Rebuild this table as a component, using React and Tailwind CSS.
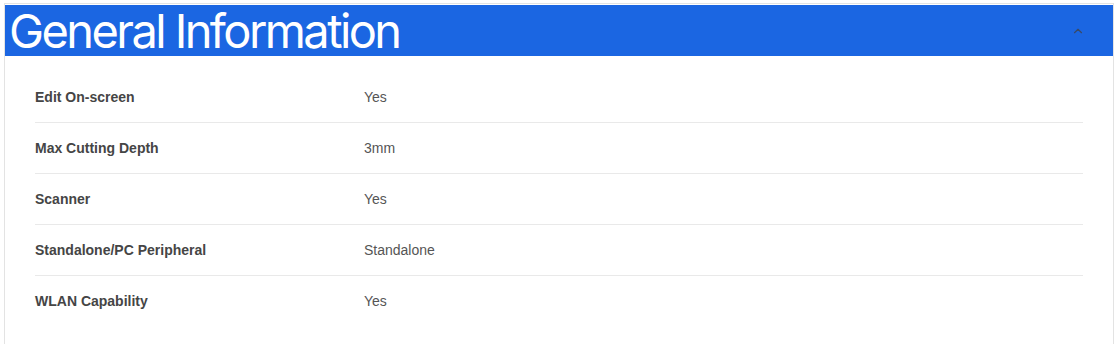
import { ChevronUp } from 'lucide-react'

const specs = [
  { label: 'Edit On-screen', value: 'Yes' },
  { label: 'Max Cutting Depth', value: '3mm' },
  { label: 'Scanner', value: 'Yes' },
  { label: 'Standalone/PC Peripheral', value: 'Standalone' },
  { label: 'WLAN Capability', value: 'Yes' },
]

function SpecRow({ label, value, last }) {
  return (
    <div className={`flex items-center h-[51px] ${last ? '' : 'border-b border-[#e9e9e9]'}`}>
      <div className="w-[329px] text-[14px] font-bold text-[#454545]">{label}</div>
      <div className="text-[14px] text-[#555]">{value}</div>
    </div>
  )
}

export default function App() {
  return (
    <div className="bg-white min-h-[344px] pt-[3px] px-[4px] font-['Liberation_Sans',Arial,sans-serif]">
      <div className="border border-[#e3e3e3] min-h-[360px]">
        <div className="mt-[1px] h-[51px] bg-[#1b66e2] flex items-center justify-between pl-[4px] pr-[28px]">
          <h2 className="font-['Inter',sans-serif] text-[47px] leading-none font-normal tracking-[-0.055em] text-white">
            General Information
          </h2>
          <ChevronUp className="w-[14px] h-[14px] text-[#3a4a66]" strokeWidth={2} />
        </div>
        <div className="pt-[16px] pl-[30px] pr-[30px]">
          {specs.map((s, i) => (
            <SpecRow key={s.label} label={s.label} value={s.value} last={i === specs.length - 1} />
          ))}
        </div>
      </div>
    </div>
  )
}
